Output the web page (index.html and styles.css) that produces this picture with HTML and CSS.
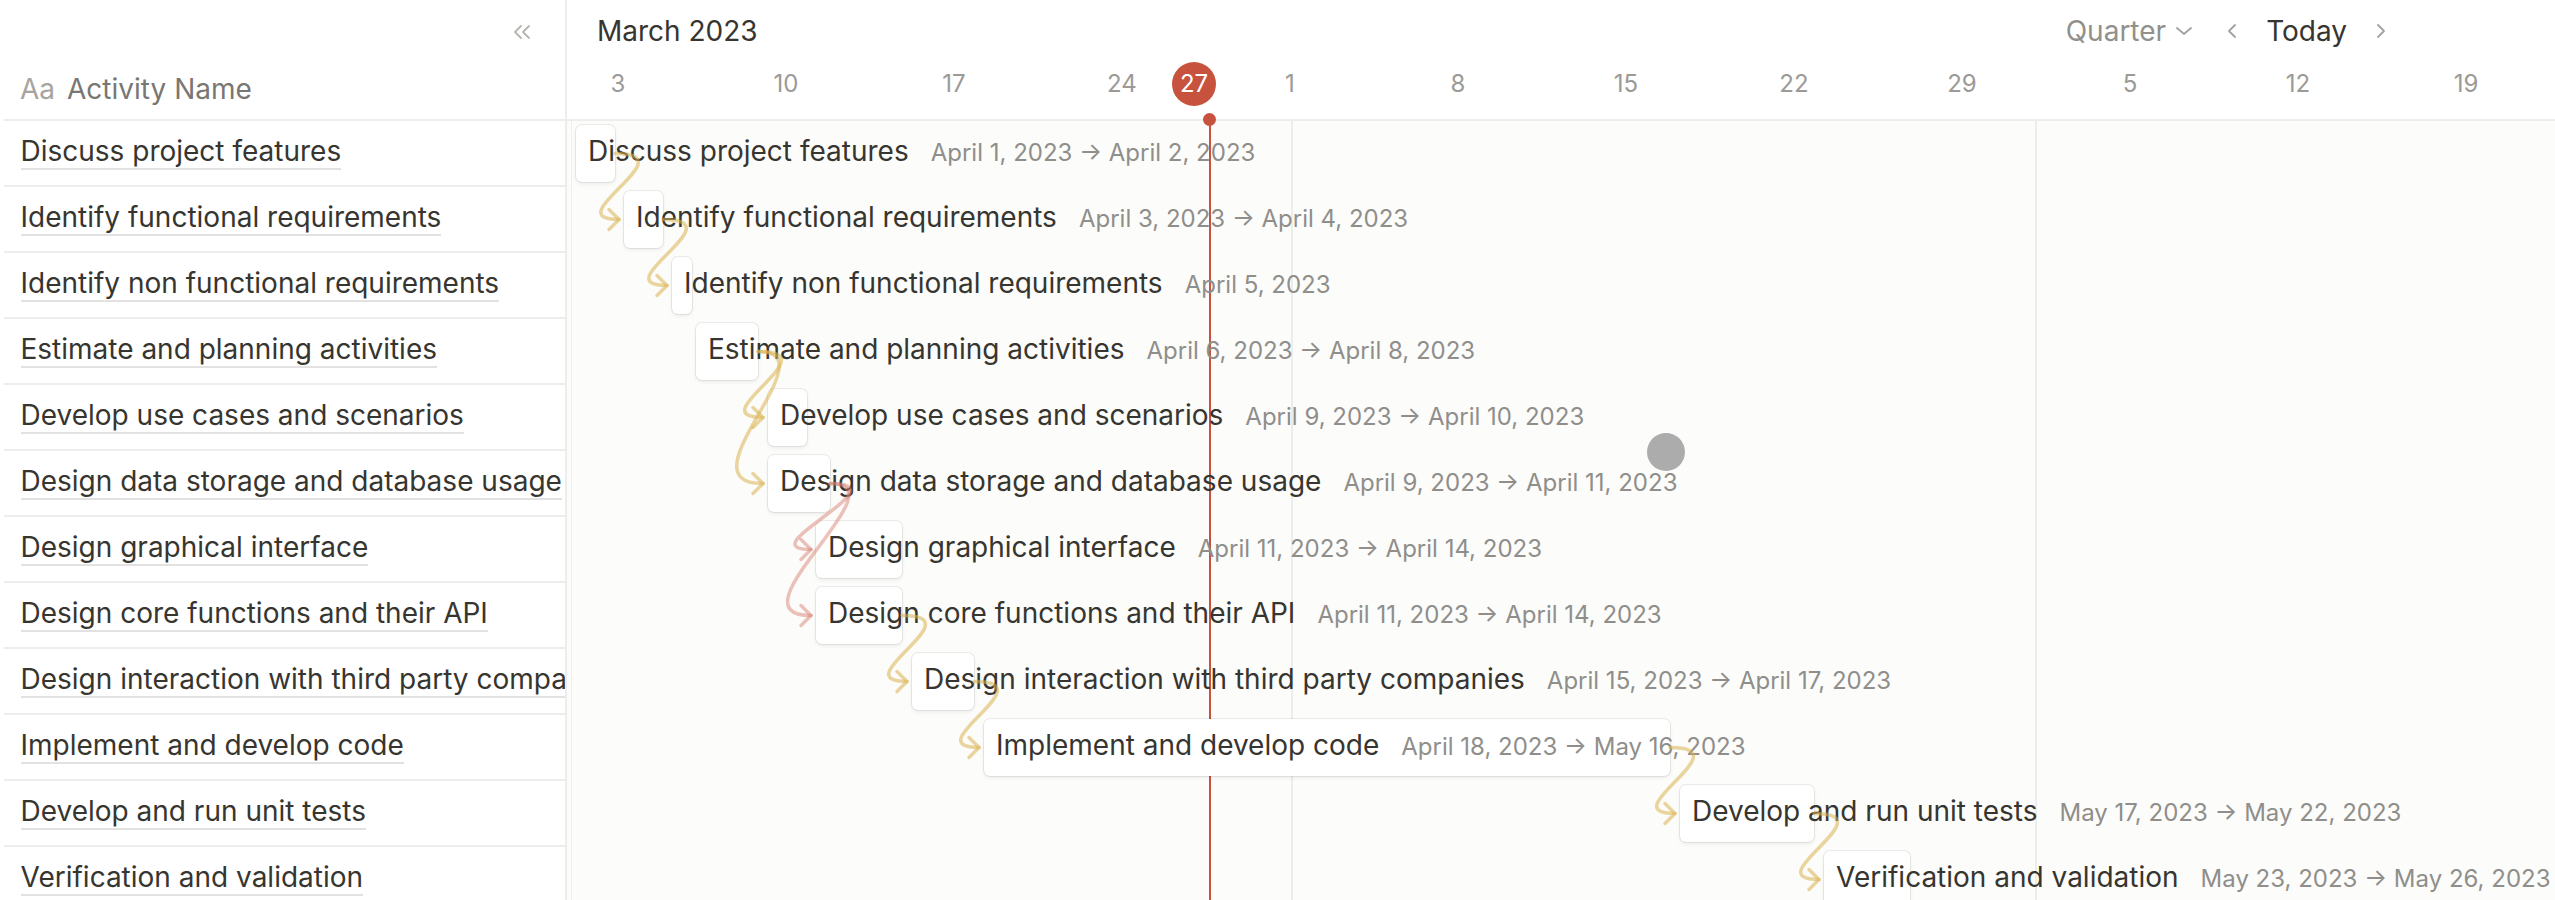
FILE: index.html
```html
<!DOCTYPE html>
<html lang="en">
<head>
<meta charset="utf-8">
<title>Timeline</title>
<link rel="stylesheet" href="styles.css">
</head>
<body>
<div class="app">
  <aside class="sidebar">
    <div class="side-head">
      <div class="side-top">
        <svg class="collapse" width="24" height="16" viewBox="0 0 24 16"><polyline points="11,2 5,8 11,14"/><polyline points="19,2 13,8 19,14"/></svg>
      </div>
      <div class="prop-head"><span class="prop-icon">Aa</span>Activity Name</div>
    </div>
    <div class="row"><span class="row-title">Discuss project features</span></div>
    <div class="row"><span class="row-title">Identify functional requirements</span></div>
    <div class="row"><span class="row-title">Identify non functional requirements</span></div>
    <div class="row"><span class="row-title">Estimate and planning activities</span></div>
    <div class="row"><span class="row-title">Develop use cases and scenarios</span></div>
    <div class="row"><span class="row-title">Design data storage and database usage</span></div>
    <div class="row"><span class="row-title">Design graphical interface</span></div>
    <div class="row"><span class="row-title">Design core functions and their API</span></div>
    <div class="row"><span class="row-title">Design interaction with third party companies</span></div>
    <div class="row"><span class="row-title">Implement and develop code</span></div>
    <div class="row"><span class="row-title">Develop and run unit tests</span></div>
    <div class="row"><span class="row-title">Verification and validation</span></div>
  </aside>

  <main class="timeline">
    <div class="tl-head">
      <div class="month-bar">
        <div class="month">March 2023</div>
        <div class="view">Quarter
          <svg class="chev-down" width="18" height="10" viewBox="0 0 18 10"><polyline points="2,2 9,8 16,2"/></svg>
        </div>
        <div class="nav">
          <svg class="chev" width="12" height="16" viewBox="0 0 12 16"><polyline points="9,2 3,8 9,14"/></svg>
          <span class="today-btn">Today</span>
          <svg class="chev" width="12" height="16" viewBox="0 0 12 16"><polyline points="3,2 9,8 3,14"/></svg>
        </div>
      </div>
      <div class="days">
        <span class="day" style="left:21px">3</span>
        <span class="day" style="left:189px">10</span>
        <span class="day" style="left:357px">17</span>
        <span class="day" style="left:525px">24</span>
        <span class="day" style="left:693px">1</span>
        <span class="day" style="left:861px">8</span>
        <span class="day" style="left:1029px">15</span>
        <span class="day" style="left:1197px">22</span>
        <span class="day" style="left:1365px">29</span>
        <span class="day" style="left:1533px">5</span>
        <span class="day" style="left:1701px">12</span>
        <span class="day" style="left:1869px">19</span>
        <span class="today">27</span>
      </div>
    </div>

    <div class="now-line"></div>
    <div class="now-dot"></div>

    <div class="tl-body">
      <div class="edge-line"></div>
      <div class="month-line" style="left:724px"></div>
      <div class="month-line" style="left:1468px"></div>

      <div class="tl-row"><div class="task" style="margin-left:9px"><span class="task-box" style="width:39px"></span><span class="task-title">Discuss project features</span><span class="task-dates">April 1, 2023 → April 2, 2023</span></div></div>
      <div class="tl-row"><div class="task" style="margin-left:57px"><span class="task-box" style="width:39px"></span><span class="task-title">Identify functional requirements</span><span class="task-dates">April 3, 2023 → April 4, 2023</span></div></div>
      <div class="tl-row"><div class="task" style="margin-left:105px"><span class="task-box" style="width:20px"></span><span class="task-title">Identify non functional requirements</span><span class="task-dates">April 5, 2023</span></div></div>
      <div class="tl-row"><div class="task" style="margin-left:129px"><span class="task-box" style="width:62px"></span><span class="task-title">Estimate and planning activities</span><span class="task-dates">April 6, 2023 → April 8, 2023</span></div></div>
      <div class="tl-row"><div class="task" style="margin-left:201px"><span class="task-box" style="width:39px"></span><span class="task-title">Develop use cases and scenarios</span><span class="task-dates">April 9, 2023 → April 10, 2023</span></div></div>
      <div class="tl-row"><div class="task" style="margin-left:201px"><span class="task-box" style="width:62px"></span><span class="task-title">Design data storage and database usage</span><span class="task-dates">April 9, 2023 → April 11, 2023</span></div></div>
      <div class="tl-row"><div class="task" style="margin-left:249px"><span class="task-box" style="width:86px"></span><span class="task-title">Design graphical interface</span><span class="task-dates">April 11, 2023 → April 14, 2023</span></div></div>
      <div class="tl-row"><div class="task" style="margin-left:249px"><span class="task-box" style="width:86px"></span><span class="task-title">Design core functions and their API</span><span class="task-dates">April 11, 2023 → April 14, 2023</span></div></div>
      <div class="tl-row"><div class="task" style="margin-left:345px"><span class="task-box" style="width:62px"></span><span class="task-title">Design interaction with third party companies</span><span class="task-dates">April 15, 2023 → April 17, 2023</span></div></div>
      <div class="tl-row"><div class="task" style="margin-left:417px"><span class="task-box" style="width:686px"></span><span class="task-title">Implement and develop code</span><span class="task-dates">April 18, 2023 → May 16, 2023</span></div></div>
      <div class="tl-row"><div class="task" style="margin-left:1113px"><span class="task-box" style="width:134px"></span><span class="task-title">Develop and run unit tests</span><span class="task-dates">May 17, 2023 → May 22, 2023</span></div></div>
      <div class="tl-row"><div class="task" style="margin-left:1257px"><span class="task-box" style="width:86px"></span><span class="task-title">Verification and validation</span><span class="task-dates">May 23, 2023 → May 26, 2023</span></div></div>

      <svg class="links" width="1988" height="779" viewBox="0 0 1988 779">
        <g class="link ok">
          <path d="M48 32.5 C123 32.5, -13 98.5, 52 98.5"/><path d="M42 88.5 L52 98.5 L42 108.5"/>
          <path d="M96 98.5 C171 98.5, 35 164.5, 100 164.5"/><path d="M90 154.5 L100 164.5 L90 174.5"/>
          <path d="M191 230.5 C266 230.5, 131 296.5, 196 296.5"/><path d="M186 286.5 L196 296.5 L186 306.5"/>
          <path d="M191 230.5 C266 230.5, 111 362.5, 196 362.5"/><path d="M186 352.5 L196 362.5 L186 372.5"/>
          <path d="M335 494.5 C410 494.5, 275 560.5, 340 560.5"/><path d="M330 550.5 L340 560.5 L330 570.5"/>
          <path d="M407 560.5 C482 560.5, 347 626.5, 412 626.5"/><path d="M402 616.5 L412 626.5 L402 636.5"/>
          <path d="M1103 626.5 C1178 626.5, 1043 692.5, 1108 692.5"/><path d="M1098 682.5 L1108 692.5 L1098 702.5"/>
          <path d="M1247 692.5 C1322 692.5, 1187 758.5, 1252 758.5"/><path d="M1242 748.5 L1252 758.5 L1242 768.5"/>
        </g>
        <g class="link bad">
          <path d="M263 362.5 C338 362.5, 179 428.5, 244 428.5"/><path d="M234 418.5 L244 428.5 L234 438.5"/>
          <path d="M263 362.5 C338 362.5, 159 494.5, 244 494.5"/><path d="M234 484.5 L244 494.5 L234 504.5"/>
        </g>
      </svg>

      <div class="cursor-dot"></div>
    </div>
  </main>
</div>
</body>
</html>
```

FILE: styles.css
```css
* { box-sizing: border-box; }
html, body { margin: 0; height: 100%; }
body {
  font-family: Inter, "Liberation Sans", sans-serif;
  color: #37352f;
  background: #fff;
  overflow: hidden;
}
.app { display: flex; width: 2555px; height: 900px; overflow: hidden; }

/* sidebar */
.sidebar {
  width: 567px;
  flex: none;
  padding-left: 4px;
  border-right: 2px solid #ededec;
  background: #fff;
  overflow: hidden;
}
.side-head {
  height: 121px;
  border-bottom: 2px solid #ededec;
}
.side-top {
  height: 62px;
  display: flex;
  justify-content: flex-end;
  padding: 24px 31px 0 0;
}
.collapse polyline { fill: none; stroke: #b6b5b1; stroke-width: 1.8; stroke-linecap: round; stroke-linejoin: round; }
.prop-head {
  height: 57px;
  line-height: 54px;
  padding-left: 16px;
  font-size: 28px;
  color: #787774;
  white-space: nowrap;
}
.prop-icon { color: #a6a5a1; margin-right: 12px; }
.row {
  height: 66px;
  line-height: 61px;
  padding-left: 16.5px;
  border-bottom: 2px solid #ededec;
  font-size: 28px;
  white-space: nowrap;
  overflow: hidden;
}
.row-title { border-bottom: 2px solid #e3e2e0; }

/* timeline */
.timeline {
  flex: 1;
  position: relative;
  display: flex;
  flex-direction: column;
  overflow: hidden;
}
.tl-head {
  flex: none;
  height: 121px;
  border-bottom: 2px solid #ededec;
  background: #fff;
}
.month-bar {
  height: 61px;
  display: flex;
  align-items: center;
  padding: 0 168px 0 30px;
  font-size: 28px;
  white-space: nowrap;
}
.month { flex: 1; }
.view { display: flex; align-items: center; gap: 9px; color: #91908c; }
.chev-down polyline, .chev polyline { fill: none; stroke: #a3a29e; stroke-width: 1.8; stroke-linecap: round; stroke-linejoin: round; }
.nav { display: flex; align-items: center; gap: 28px; margin-left: 33px; }
.today-btn { color: #37352f; }
.days { position: relative; height: 58px; }
.day {
  position: absolute;
  top: 1px;
  width: 60px;
  height: 44px;
  line-height: 44px;
  text-align: center;
  font-size: 24px;
  color: #9b9a97;
}
.today {
  position: absolute;
  top: 1px;
  left: 605px;
  width: 44px;
  height: 44px;
  border-radius: 50%;
  background: #c7533f;
  color: #fff;
  font-size: 24px;
  line-height: 44px;
  text-align: center;
}
.now-line {
  position: absolute;
  left: 642px;
  top: 119px;
  bottom: 0;
  width: 2px;
  background: #c7533f;
  z-index: 1;
}
.now-dot {
  position: absolute;
  left: 636px;
  top: 113px;
  width: 13px;
  height: 13px;
  border-radius: 50%;
  background: #c7533f;
  z-index: 1;
}
.tl-body {
  flex: 1;
  position: relative;
  background: #fcfcfb;
}
.edge-line { position: absolute; left: 4px; top: 0; bottom: 0; width: 1px; background: #f0f0ef; }
.month-line { position: absolute; top: 0; bottom: 0; width: 2px; background: #ededec; }
.tl-row { height: 66px; padding-top: 4px; }
.task {
  position: relative;
  z-index: 2;
  height: 57px;
  line-height: 53px;
  padding-left: 12px;
  white-space: nowrap;
}
.task-box {
  position: absolute;
  left: 0;
  top: 0;
  height: 57px;
  background: #fff;
  border-radius: 6px;
  box-shadow: 0 0 0 1px rgba(15, 15, 15, 0.07), 0 2px 4px rgba(15, 15, 15, 0.07);
}
.task-title { position: relative; font-size: 28px; color: #37352f; }
.task-dates { position: relative; margin-left: 22px; font-size: 24px; color: #8f8e8a; }
.links {
  position: absolute;
  left: 0;
  top: 0;
  z-index: 3;
  pointer-events: none;
  overflow: visible;
}
.link path { fill: none; stroke-width: 3.5; stroke-linecap: round; stroke-linejoin: round; }
.link.ok path { stroke: rgba(218, 178, 80, 0.55); }
.link.bad path { stroke: rgba(215, 120, 105, 0.45); }
.cursor-dot {
  position: absolute;
  left: 1080px;
  top: 312px;
  width: 38px;
  height: 38px;
  border-radius: 50%;
  background: #acacac;
  z-index: 4;
}
```
